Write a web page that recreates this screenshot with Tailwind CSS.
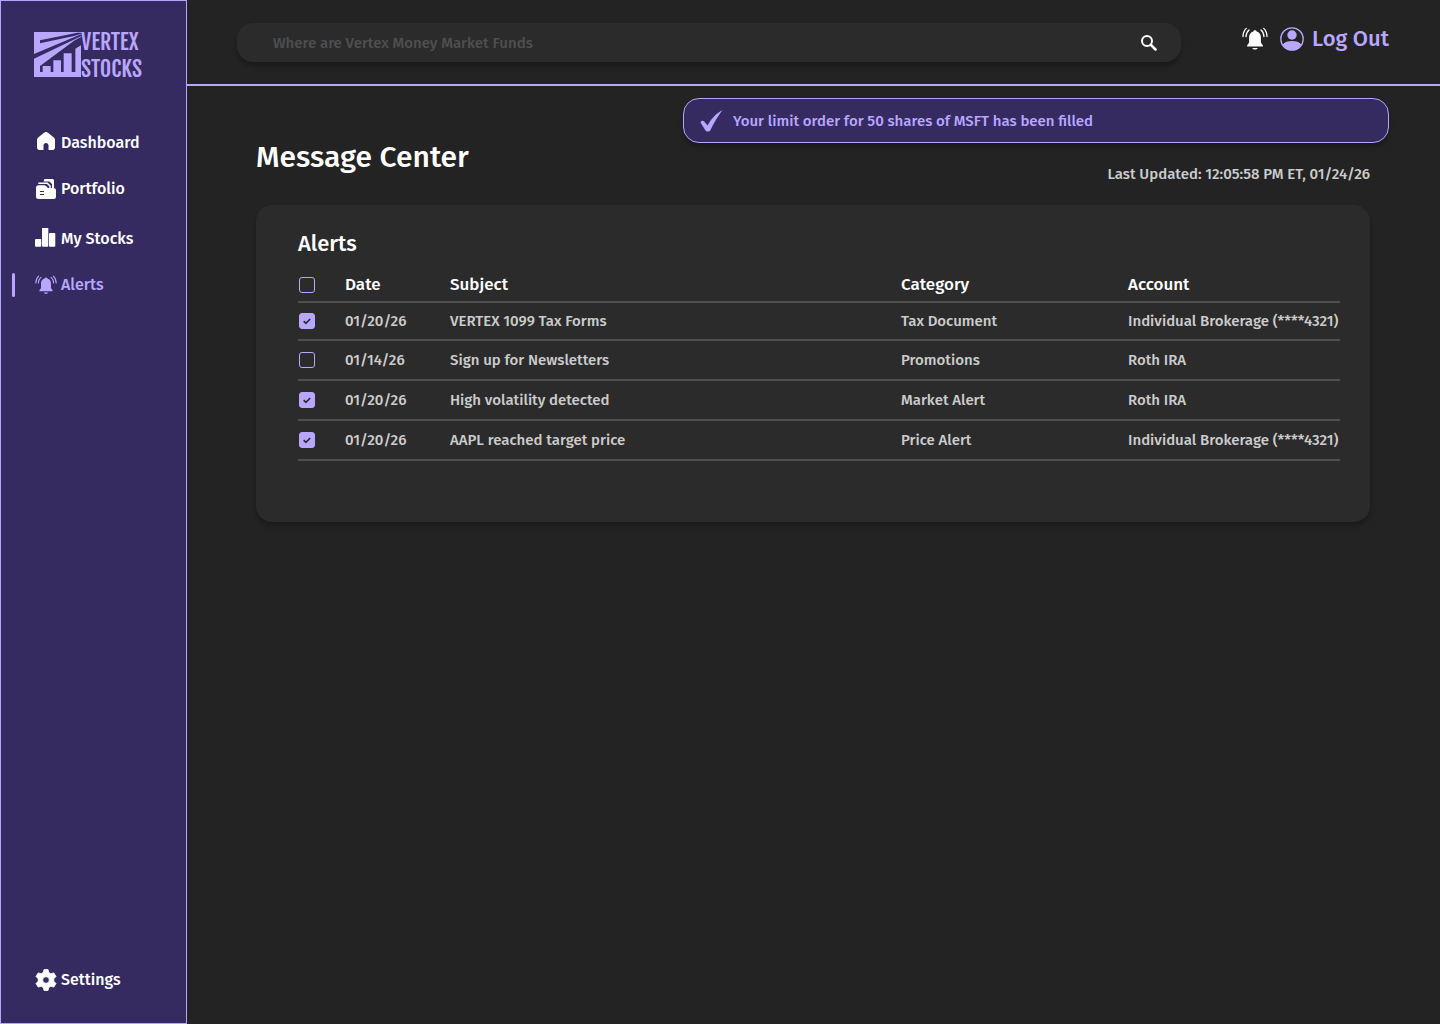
<!DOCTYPE html>
<html lang="en">
<head>
<meta charset="utf-8">
<meta name="viewport" content="width=device-width, initial-scale=1">
<title>Vertex Stocks – Message Center</title>
<script src="https://cdn.jsdelivr.net/npm/@tailwindcss/browser@4"></script>
</head>
<body class="bg-[#232323] text-white font-medium font-['Fira_Sans','Noto_Sans',sans-serif]">
<svg class="hidden" aria-hidden="true">
  <symbol id="bell" viewBox="0 0 26 24">
    <path fill="currentColor" d="M13 3.2c.9 0 1.500.5 1.700 1.200 2.700.8 4.200 3 4.200 5.800v5.300l2 3v.9H5.100v-.9l2-3v-5.300c0-2.800 1.500-5 4.200-5.800.2-.7.8-1.200 1.700-1.200zM10.300 21h5.400c-.4 1-1.400 1.600-2.700 1.600s-2.300-.6-2.700-1.600z"/>
    <path fill="none" stroke="currentColor" stroke-width="1.300" stroke-linecap="round" d="M4.300 1.400Q1 4.500 1 9.600M7 3Q4.200 5.300 4 9.600M21.700 1.400Q25 4.500 25 9.600M19 3Q21.800 5.300 22 9.600"/>
  </symbol>
  <symbol id="tick" viewBox="0 0 16 16">
    <path fill="none" stroke="#2b2b2b" stroke-width="1.700" d="M4.700 8.200l2.200 2.100 4.300-4.300"/>
  </symbol>
</svg>
<div class="flex min-h-screen">
  <aside class="flex w-[187px] shrink-0 flex-col border border-[#b4a5ff] bg-[#352b61] pt-[31px] pb-[27px]">
    <a href="#" class="ml-[33px] flex text-[#b8a6ff]" aria-label="Vertex Stocks">
      <svg class="h-[45px] w-[47px]" viewBox="0 0 141 135">
        <path fill="#b8a6ff" d="M0 0h141v135H0z"/>
        <path fill="#352b61" d="M18 25L130 2H141V5L120 12 18 34zM0 66L141 7V13L0 80zM18 102L120 26 141 15V40L124 50V120H113V64H89V120H81V85H58V120H50V102H26V120H18z"/>
      </svg>
      <span class="-mt-1 font-['Fjalla_One','Bebas_Neue','Antonio','Oswald','Fira_Sans_Extra_Condensed','Liberation_Sans',sans-serif] font-normal text-[22px] leading-[27px]">VERTEX<br>STOCKS</span>
    </a>
    <nav class="mt-[49px] flex grow flex-col gap-[26px] text-base leading-6">
      <div class="flex flex-col gap-[22px]">
        <a href="#" class="flex items-center gap-1 pl-[34px]">
          <svg class="size-[22px]" viewBox="0 0 22 22" fill="currentColor"><path d="M11 0c.7 0 1.400.3 2 .8l5.500 4.500c.9.7 1.500 1.700 1.500 2.800v7.400c0 1.500-1.200 2.600-2.700 2.600H13.500v-4.600c0-1.500-1-2.500-2.500-2.500s-2.500 1-2.500 2.500v4.600H4.700C3.200 18.100 2 17 2 15.500V8.100c0-1.100.6-2.100 1.500-2.800L9 .8c.6-.5 1.300-.8 2-.8z"/></svg>
          Dashboard
        </a>
        <a href="#" class="flex items-center gap-1 pl-[34px]">
          <svg class="size-[22px]" viewBox="0 0 22 22"><path fill="currentColor" d="M9.500 1h8A1.500 1.500 0 0119 2.500V10h-2V6L14.500 3.500H8.500z"/><path fill="none" stroke="currentColor" stroke-width="1.600" d="M3.300 5.200h9L15 8v2"/><path fill="currentColor" d="M3.500 7.200h5.600c.8 0 1.300.3 1.900.8l2 2h5.500a2.500 2.500 0 012.500 2.500v6a2.500 2.500 0 01-2.500 2.500h-15A2.500 2.500 0 011 18.500V9.700a2.500 2.500 0 012.500-2.500z"/><path stroke="#352b61" stroke-width="1.200" d="M5 13.500h4M5 16.500h4"/></svg>
          Portfolio
        </a>
      </div>
      <div class="flex flex-col gap-[22px]">
        <a href="#" class="flex items-center gap-1 pl-[34px]">
          <svg class="size-[22px]" viewBox="0 0 22 22" fill="currentColor"><rect y="11" width="6.300" height="7.700" rx="1"/><rect x="7" y="-1" width="6.300" height="19.700" rx="1"/><rect x="14" y="5" width="6.300" height="13.700" rx="1"/></svg>
          My Stocks
        </a>
        <a href="#" aria-current="page" class="flex items-center text-[#b8a6ff]">
          <span class="ml-[11px] h-6 w-[3px] rounded-full bg-current"></span>
          <svg class="mr-1 ml-5 size-[22px]"><use href="#bell"/></svg>
          Alerts
        </a>
      </div>
    </nav>
    <a href="#" class="flex items-center gap-1 pl-[34px] text-base leading-8">
      <svg class="size-[22px]" viewBox="0 0 22 22"><path fill="currentColor" fill-rule="evenodd" d="M9 .5h4l.8 3 2 1.200 3-.8 2.200 3.600-2.200 2.300v2.400l2.200 2.300-2.200 3.600-3-.8-2 1.200-.8 3H9l-.8-3-2-1.200-3 .8L1 14.500l2.200-2.300V9.800L1 7.500l2.200-3.600 3 .8 2-1.200zM11 7.700a3.300 3.300 0 100 6.600 3.300 3.300 0 000-6.600z" stroke="currentColor" stroke-linejoin="round" stroke-width=".8"/></svg>
      Settings
    </a>
  </aside>

  <div class="relative flex min-w-0 grow flex-col">
    <header class="flex h-[86px] items-start border-b-2 border-[#b4a5ff] pt-[23px] pr-[51px] pl-[50px]">
      <form class="flex h-[39px] grow items-center rounded-2xl bg-[#2b2b2b] pr-5 pl-9 shadow-[0_4px_4px_rgba(0,0,0,0.25)]">
        <input type="search" aria-label="Search" placeholder="Where are Vertex Money Market Funds" class="h-6 min-w-0 grow text-[15px] outline-none placeholder:text-[#4f4f4f]">
        <button type="button" aria-label="Search" class="p-1">
          <svg class="size-4" viewBox="0 0 16 16" fill="none" stroke="white" stroke-width="2"><circle cx="6" cy="6" r="5"/><path stroke-width="2.500" stroke-linecap="round" d="M10 10l4.500 4.500"/></svg>
        </button>
      </form>
      <div class="ml-[61px] flex h-8 items-center text-[#b8a6ff]">
        <button type="button" aria-label="Notifications" class="text-white"><svg class="h-6 w-[26px]"><use href="#bell"/></svg></button>
        <svg class="ml-3 size-6" viewBox="0 0 24 24"><circle cx="12" cy="12" r="11.200" fill="none" stroke="currentColor" stroke-width="1.300"/><circle cx="12" cy="8" r="4.700" fill="currentColor"/><path fill="currentColor" d="M2.500 17.800C4.500 15 8 14 12 14s7.500 1 9.500 3.800C19.500 21.300 16 23.300 12 23.300s-7.500-2-9.500-5.500z"/></svg>
        <a href="#" class="ml-2 text-[22px] leading-8">Log Out</a>
      </div>
    </header>

    <div role="status" class="absolute top-[98px] right-[51px] flex h-[45px] w-[706px] max-w-full items-center rounded-2xl border border-[#b4a5ff] bg-[#352b61] pl-4 text-[15px] leading-6 text-[#b8a6ff] shadow-[0_4px_4px_rgba(0,0,0,0.25)]">
      <svg class="mr-2.5 h-6 w-[23px]" viewBox="0 0 23 24" fill="currentColor"><path d="M.5 13.500C1 11.500 3 11 4.200 12.500L7.500 16.500C11.500 9.500 16 4.500 22.500 1C17.500 7.500 14 14 10.500 21C9.500 23 6.500 23 5.500 21.500z"/></svg>
      Your limit order for 50 shares of MSFT has been filled
    </div>

    <main class="pt-[51px] pr-[70px] pl-[69px]">
      <div class="flex h-[68px] items-start justify-between">
        <h1 class="text-3xl leading-10">Message Center</h1>
        <p class="pt-[26px] text-[15px] text-[#cccccc]">Last Updated: 12:05:58 PM ET, 01/24/26</p>
      </div>
      <section class="rounded-2xl bg-[#2b2b2b] pt-6 pr-[30px] pb-[61px] pl-[42px] shadow-[0_4px_4px_rgba(0,0,0,0.25)]">
        <h2 class="text-[22px] leading-[30px]">Alerts</h2>
        <table class="mt-2.5 w-full table-fixed text-left text-[15px] text-[#cccccc]">
          <thead class="text-[17px] text-white">
            <tr class="h-[33px] border-b-2 border-[#4f4f4f]">
              <th class="w-[47px] font-medium"><label class="ml-px block size-4"><input type="checkbox" aria-label="Select all alerts" class="block size-4 appearance-none rounded-[3px] border border-[#b8a6ff] checked:bg-[#b8a6ff]"></label></th>
              <th class="w-[105px] font-medium">Date</th>
              <th class="font-medium">Subject</th>
              <th class="w-[227px] font-medium">Category</th>
              <th class="w-[212px] font-medium">Account</th>
            </tr>
          </thead>
          <tbody>
            <tr class="h-[38px] border-b-2 border-[#4f4f4f]">
              <td><label class="relative ml-px block size-4"><input type="checkbox" checked aria-label="Select VERTEX 1099 Tax Forms" class="peer block size-4 appearance-none rounded-[3px] border border-[#b8a6ff] checked:bg-[#b8a6ff]"><svg class="absolute inset-0 hidden size-4 peer-checked:block"><use href="#tick"/></svg></label></td>
              <td>01/20/26</td><td>VERTEX 1099 Tax Forms</td><td>Tax Document</td><td class="whitespace-nowrap">Individual Brokerage (****4321)</td>
            </tr>
            <tr class="h-10 border-b-2 border-[#4f4f4f]">
              <td><label class="relative ml-px block size-4"><input type="checkbox" aria-label="Select Sign up for Newsletters" class="peer block size-4 appearance-none rounded-[3px] border border-[#b8a6ff] checked:bg-[#b8a6ff]"><svg class="absolute inset-0 hidden size-4 peer-checked:block"><use href="#tick"/></svg></label></td>
              <td>01/14/26</td><td>Sign up for Newsletters</td><td>Promotions</td><td>Roth IRA</td>
            </tr>
            <tr class="h-10 border-b-2 border-[#4f4f4f]">
              <td><label class="relative ml-px block size-4"><input type="checkbox" checked aria-label="Select High volatility detected" class="peer block size-4 appearance-none rounded-[3px] border border-[#b8a6ff] checked:bg-[#b8a6ff]"><svg class="absolute inset-0 hidden size-4 peer-checked:block"><use href="#tick"/></svg></label></td>
              <td>01/20/26</td><td>High volatility detected</td><td>Market Alert</td><td>Roth IRA</td>
            </tr>
            <tr class="h-10 border-b-2 border-[#4f4f4f]">
              <td><label class="relative ml-px block size-4"><input type="checkbox" checked aria-label="Select AAPL reached target price" class="peer block size-4 appearance-none rounded-[3px] border border-[#b8a6ff] checked:bg-[#b8a6ff]"><svg class="absolute inset-0 hidden size-4 peer-checked:block"><use href="#tick"/></svg></label></td>
              <td>01/20/26</td><td>AAPL reached target price</td><td>Price Alert</td><td class="whitespace-nowrap">Individual Brokerage (****4321)</td>
            </tr>
          </tbody>
        </table>
      </section>
    </main>
  </div>
</div>
</body>
</html>
